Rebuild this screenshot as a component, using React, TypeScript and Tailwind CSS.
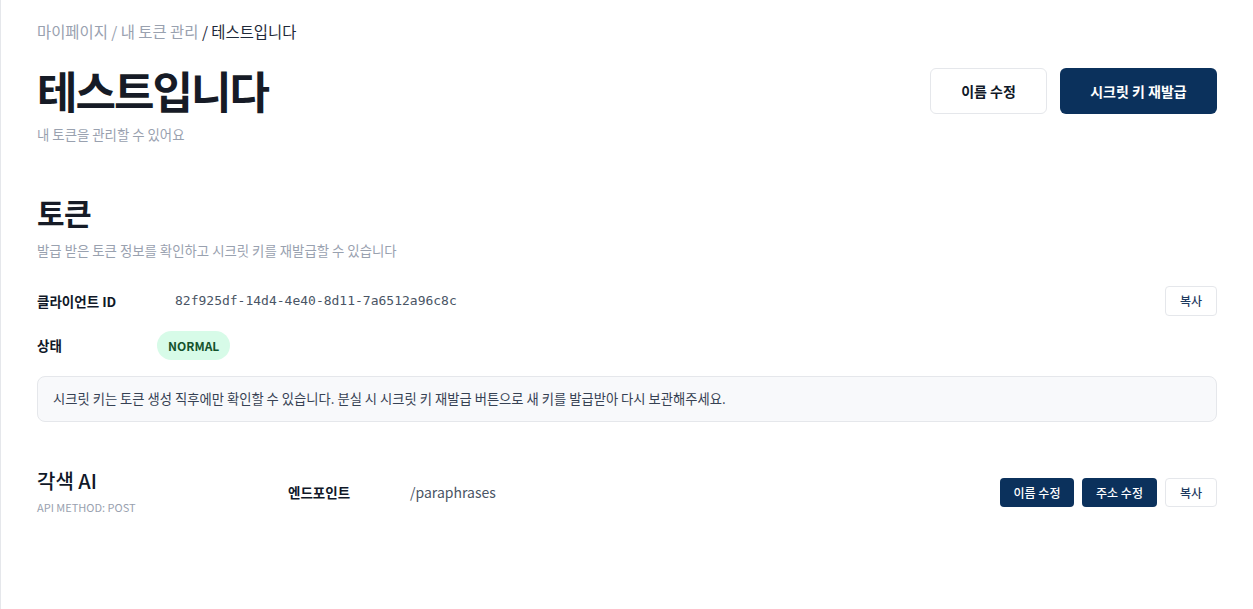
import React from "react";

const font = { fontFamily: '"Noto Sans CJK KR", "Noto Sans", sans-serif' };

export default function App() {
  return (
    <div
      className="min-h-screen bg-white border-l border-gray-200 text-gray-900"
      style={font}
    >
      <main className="pl-[36px] pr-[36px] pt-[20px]">
        {/* Breadcrumb */}
        <nav className="text-[15.4px] leading-[22px] text-gray-400">
          마이페이지 / 내 토큰 관리 <span className="text-gray-800">/ 테스트입니다</span>
        </nav>

        {/* Header */}
        <div className="mt-[24px] flex items-start justify-between">
          <div>
            <h1 className="text-[44px] leading-[48px] font-bold tracking-[-0.045em] text-[#161b26]">
              테스트입니다
            </h1>
            <p className="mt-[10px] text-[13.4px] leading-[20px] text-gray-400">내 토큰을 관리할 수 있어요</p>
          </div>
          <div className="flex gap-[13px] mt-[2px]">
            <button className="w-[117px] h-[46px] rounded-md border border-gray-200 bg-white text-[14px] font-semibold text-gray-900">
              이름 수정
            </button>
            <button className="w-[157px] h-[46px] rounded-md bg-[#0b315c] text-[14px] font-semibold text-white">
              시크릿 키 재발급
            </button>
          </div>
        </div>

        {/* Token section */}
        <section className="mt-[48px]">
          <h2 className="text-[30px] leading-[40px] font-bold tracking-[-0.02em] text-[#161b26]">토큰</h2>
          <p className="mt-[8px] text-[13.4px] leading-[20px] text-gray-400">
            발급 받은 토큰 정보를 확인하고 시크릿 키를 재발급할 수 있습니다
          </p>

          <div className="mt-[26px] flex items-center h-[30px]">
            <span className="w-[120px] text-[13.5px] font-semibold text-gray-900">클라이언트 ID</span>
            <span
              className="ml-[18px] flex-1 text-[13px] text-gray-600"
              style={{ fontFamily: '"DejaVu Sans Mono", monospace' }}
            >
              82f925df-14d4-4e40-8d11-7a6512a96c8c
            </span>
            <button className="w-[52px] h-[30px] rounded border border-gray-200 bg-white text-[12px] font-medium text-[#1e3a5f]">
              복사
            </button>
          </div>

          <div className="mt-[15px] flex items-center h-[29px]">
            <span className="w-[120px] text-[13.5px] font-semibold text-gray-900">상태</span>
            <span className="h-[29px] px-[11px] rounded-full bg-[#d7fbe8] text-[12px] font-bold text-[#14532d] flex items-center">
              NORMAL
            </span>
          </div>

          <div className="mt-[16px] rounded-lg border border-gray-200 bg-[#f8f9fb] h-[46px] px-[15px] flex items-center text-[13.3px] text-gray-700">
            시크릿 키는 토큰 생성 직후에만 확인할 수 있습니다. 분실 시 시크릿 키 재발급 버튼으로 새 키를 발급받아 다시 보관해주세요.
          </div>
        </section>

        {/* Endpoint row */}
        <section className="mt-[45px] flex items-start">
          <div className="w-[251px]">
            <div className="text-[20px] leading-[28px] font-medium text-gray-900">각색 AI</div>
            <div className="mt-[5px] text-[11px] leading-[14px] text-gray-400">API METHOD: POST</div>
          </div>
          <div className="flex items-center h-[29px] mt-[11px] flex-1">
            <span className="w-[122px] text-[13.5px] font-semibold text-gray-900">엔드포인트</span>
            <span className="flex-1 text-[14px] text-gray-600">/paraphrases</span>
            <div className="flex gap-[8px]">
              <button className="w-[74px] h-[29px] rounded bg-[#0b315c] text-[12px] font-medium text-white">
                이름 수정
              </button>
              <button className="w-[75px] h-[29px] rounded bg-[#0b315c] text-[12px] font-medium text-white">
                주소 수정
              </button>
              <button className="w-[52px] h-[29px] rounded border border-gray-200 bg-white text-[12px] font-medium text-[#1e3a5f]">
                복사
              </button>
            </div>
          </div>
        </section>
      </main>
    </div>
  );
}
